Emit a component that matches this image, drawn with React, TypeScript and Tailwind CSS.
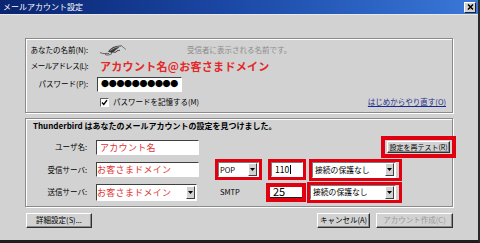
import React from "react";

const FONT = { fontFamily: '"Noto Sans CJK JP", "Noto Sans", sans-serif' };

function DropBtn({ h = "h-[13px]" }: { h?: string }) {
  return (
    <div
      className={`w-[9px] ${h} shrink-0 bg-[#d2d2d2] border border-t-white border-l-white border-b-[#404040] border-r-[#404040] flex items-center justify-center`}
    >
      <svg width="5" height="3" viewBox="0 0 5 3">
        <path d="M0 0 H5 L2.5 3 Z" fill="#000" />
      </svg>
    </div>
  );
}

function Sunken({ className = "", children }: { className?: string; children?: React.ReactNode }) {
  return (
    <div
      className={`bg-white border border-t-[#7a7a7a] border-l-[#7a7a7a] border-b-white border-r-white ${className}`}
    >
      {children}
    </div>
  );
}

function Btn({ className = "", children, disabled = false }: { className?: string; children?: React.ReactNode; disabled?: boolean }) {
  return (
    <div
      className={`bg-[#d2d2d2] border border-t-white border-l-white border-b-[#303030] border-r-[#303030] shadow-[inset_-1px_-1px_0_#8a8a8a] flex items-center justify-center whitespace-nowrap text-[7.5px] leading-none ${disabled ? "text-[#9a9a9a]" : "text-black"} ${className}`}
    >
      {children}
    </div>
  );
}

function Group({ className = "", children }: { className?: string; children?: React.ReactNode }) {
  return (
    <div className={`border border-[#8a8a8a] shadow-[inset_1px_1px_0_#ffffff,1px_1px_0_#ffffff] ${className}`}>
      {children}
    </div>
  );
}

function Label({ w = "w-[62px]", className = "", children }: { w?: string; className?: string; children?: React.ReactNode }) {
  return <div className={`${w} shrink-0 flex justify-end whitespace-nowrap ${className}`}>{children}</div>;
}

function Quill() {
  return (
    <svg width="28" height="12" viewBox="0 0 28 12">
      <path d="M1 8.5 C4 10.5 8 9 10 9.5" stroke="#555" strokeWidth="0.9" fill="none" />
      <path d="M9 7.5 C12 3 17 1 23 1.5 C20 3 18 5 15 7.5 C13 8.8 11 8.8 9 7.5 Z" fill="#3a3a3a" />
      <path d="M11 6.5 C14 4.5 17 3 21 2.5" stroke="#d0d0d0" strokeWidth="0.6" fill="none" />
      <path d="M12 9 C14 6.5 16 10 18 7 C19 6 20 7 21 6" stroke="#222" strokeWidth="0.9" fill="none" />
      <path d="M22 1.5 L27 5.5" stroke="#666" strokeWidth="0.8" />
      <path d="M6 10.5 C8 11.5 11 11 13 9.5" stroke="#444" strokeWidth="0.8" fill="none" />
    </svg>
  );
}

export default function App() {
  return (
    <div
      className="w-[480px] h-[243px] bg-[#d2d2d2] flex flex-col border-r-2 border-r-[#2a2a2a] border-b-[3px] border-b-[#1e1e1e] overflow-hidden"
      style={FONT}
    >
      {/* title bar */}
      <div className="h-[14px] shrink-0 bg-gradient-to-r from-[#0a2470] via-[#1c4aa8] to-[#3a78d8] flex items-center justify-between pl-[3px] pr-[2px]">
        <span className="text-white text-[8px] leading-none">メールアカウント設定</span>
        <div className="w-[12px] h-[11px] bg-[#d2d2d2] border border-t-white border-l-white border-b-[#202020] border-r-[#202020] flex items-center justify-center">
          <svg width="7" height="6" viewBox="0 0 7 6">
            <path d="M1 0.5 L6 5.5 M6 0.5 L1 5.5" stroke="#000" strokeWidth="1.5" />
          </svg>
        </div>
      </div>
      <div className="h-[1px] bg-[#e8e8e8]" />

      <div className="flex flex-col pl-[25px] pr-[25px] pt-[23px] text-[7.5px] leading-none text-black">
        {/* group 1 */}
        <Group className="h-[75px] flex flex-col pt-[2px]">
          <div className="flex items-center h-[16px] mt-[1px]">
            <Label>あなたの名前(N):</Label>
            <div className="ml-[11px] w-[28px] flex items-center">
              <Quill />
            </div>
            <div className="ml-[60px] text-[#8c8c8c] whitespace-nowrap">受信者に表示される名前です。</div>
          </div>
          <div className="flex items-center h-[16px]">
            <Label className="tracking-[-0.6px]">メールアドレス(L):</Label>
            <div className="ml-[12px] text-[11px] font-bold text-[#e42828] tracking-[0.3px] whitespace-nowrap">
              アカウント名@お客さまドメイン
            </div>
          </div>
          <div className="flex items-center h-[16px] mt-[2px]">
            <Label>パスワード(P):</Label>
            <Sunken className="ml-[9px] w-[85px] h-[15px] flex items-center pl-[3px] border-t-[#404040] border-l-[#404040]">
              <span className="text-[8px] tracking-[-0.3px] text-black whitespace-nowrap">●●●●●●●●●●</span>
            </Sunken>
          </div>
          <div className="flex items-center h-[20px]">
            <div className="ml-[74px] w-[9px] h-[9px] bg-white border border-t-[#606060] border-l-[#606060] border-b-white border-r-white flex items-center justify-center">
              <svg width="7" height="7" viewBox="0 0 7 7">
                <path d="M1 3.5 L2.8 5.5 L6 1.2" stroke="#000" strokeWidth="1.4" fill="none" />
              </svg>
            </div>
            <div className="ml-[4px] whitespace-nowrap">パスワードを記憶する(M)</div>
            <div className="ml-auto mr-[6px] text-[#1a2a8c] underline whitespace-nowrap">はじめからやり直す(O)</div>
          </div>
        </Group>

        {/* group 2 */}
        <Group className="mt-[5px] h-[89px] flex flex-col pt-[1px]">
          <div className="h-[16px] pt-[2px] pl-[7px] font-bold text-[8px] whitespace-nowrap">
            Thunderbird はあなたのメールアカウントの設定を見つけました。
          </div>
          {/* user row */}
          <div className="flex items-center h-[22px]">
            <Label w="w-[61px]">ユーザ名:</Label>
            <Sunken className="ml-[9px] w-[103px] h-[15px] flex items-center pl-[3px] border-t-[#404040] border-l-[#404040]">
              <span className="text-[9px] text-[#e03434] tracking-[0.3px] whitespace-nowrap">アカウント名</span>
            </Sunken>
            <div className="ml-auto -mr-[4px] w-[75px] h-[22px] border-[4px] border-[#e00010] flex items-center justify-center">
              <Btn className="w-[63px] h-[12px] text-[7px]">設定を再テスト(R)</Btn>
            </div>
          </div>
          {/* receive row */}
          <div className="flex items-center h-[23px]">
            <Label w="w-[61px]">受信サーバ:</Label>
            <Sunken className="ml-[9px] w-[103px] h-[15px] flex items-center border-t-[#404040] border-l-[#404040]">
              <span className="text-[9px] text-[#e03434] tracking-[0.3px] whitespace-nowrap">お客さまドメイン</span>
            </Sunken>
            <div className="ml-[16px] w-[47px] h-[21px] border-[3px] border-[#e00010] flex items-center">
              <Sunken className="w-full h-full flex items-center justify-between pl-[1px] pr-[1px]">
                <span className="text-[7.5px]">POP</span>
                <DropBtn />
              </Sunken>
            </div>
            <div className="ml-[6px] w-[38px] h-[21px] border-[3px] border-[#e00010] flex items-center">
              <Sunken className="w-full h-full flex items-center pl-[3px]">
                <span className="text-[8.5px]">110</span>
                <span className="w-[1px] h-[9px] bg-black ml-[1px]" />
              </Sunken>
            </div>
            <div className="ml-[3px] w-[93px] h-[22px] border-[3px] border-[#e00010] flex items-center">
              <Sunken className="w-[84px] h-full flex items-center justify-between pl-[2px] pr-[1px]">
                <span className="text-[7.8px] whitespace-nowrap">接続の保護なし</span>
                <DropBtn />
              </Sunken>
              <div className="w-[3px] h-full bg-[#d2d2d2]" />
            </div>
          </div>
          {/* send row */}
          <div className="flex items-center h-[22px]">
            <Label w="w-[61px]">送信サーバ:</Label>
            <Sunken className="ml-[9px] w-[101px] h-[17px] flex items-center justify-between pr-[1px] border-t-[#404040] border-l-[#404040]">
              <span className="text-[9px] text-[#e03434] tracking-[0.3px] whitespace-nowrap">お客さまドメイン</span>
              <DropBtn />
            </Sunken>
            <div className="ml-[23px] w-[46px] text-[7.5px]">SMTP</div>
            <div className="w-[40px] h-[19px] border-[4px] border-[#e00010] flex items-center">
              <div className="w-full h-full bg-white flex items-end pl-[3px] border-b border-[#202020]">
                <span className="text-[11px] leading-[11px]">25</span>
              </div>
            </div>
            <div className="ml-[1px] w-[95px] h-[21px] border-[3px] border-[#e00010] flex items-center">
              <Sunken className="w-[86px] h-full flex items-center justify-between pl-[2px] pr-[1px]">
                <span className="text-[7.8px] whitespace-nowrap">接続の保護なし</span>
                <DropBtn />
              </Sunken>
              <div className="w-[3px] h-full bg-[#d2d2d2]" />
            </div>
          </div>
        </Group>

        {/* bottom buttons */}
        <div className="mt-[5px] flex items-center h-[16px]">
          <Btn className="ml-[1px] w-[66px] h-[15px]">詳細設定(S)...</Btn>
          <Btn className="ml-auto w-[53px] h-[15px]">キャンセル(A)</Btn>
          <Btn className="ml-[6px] w-[77px] h-[15px]" disabled>
            アカウント作成(C)
          </Btn>
        </div>
      </div>
    </div>
  );
}
